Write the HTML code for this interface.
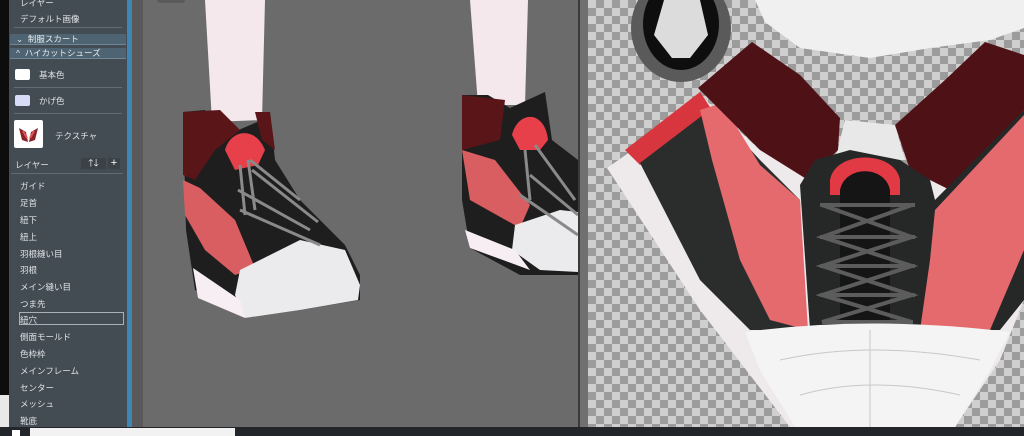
<!DOCTYPE html><html><head><meta charset="utf-8"><style>
*{margin:0;padding:0;box-sizing:border-box}
body{width:1024px;height:436px;overflow:hidden;position:relative;background:#6b6b6b;font-family:"Liberation Sans","Noto Sans CJK JP",sans-serif}
.abs{position:absolute}
#panel{left:9px;top:0;width:118px;height:427px;background:#434b53;color:#dfe3e6;font-size:8.5px}
.it{position:absolute;left:11px}
.hdr{position:absolute;left:1px;width:116px;height:11px;background:#4f6472;border-bottom:1px solid #6f8796;font-size:8.5px;line-height:11px;padding-left:6px;color:#e6eaec}
.ln{position:absolute;left:5px;width:108px;height:1px;background:#626b73}
.check{background-color:#cfcfcf;background-image:linear-gradient(45deg,#9c9c9c 25%,transparent 25%,transparent 75%,#9c9c9c 75%),linear-gradient(45deg,#9c9c9c 25%,transparent 25%,transparent 75%,#9c9c9c 75%);background-size:16px 16px;background-position:0 0,8px 8px}
</style></head><body>
<div class="abs" style="left:0;top:0;width:9px;height:427px;background:#0d0d0d"></div>
<div class="abs" style="left:0;top:395px;width:9px;height:32px;background:#e8e8e8"></div>
<div id="panel" class="abs">
<div class="it" style="top:-3px">レイヤー</div>
<div class="it" style="top:13px">デフォルト画像</div>
<div class="ln" style="top:27px"></div>
<div class="hdr" style="top:34px">⌄&nbsp; 制服スカート</div>
<div class="hdr" style="top:48px">^&nbsp; ハイカットシューズ</div>
<div class="abs" style="left:6px;top:69px;width:15px;height:11px;background:#fff;border-radius:2px"></div>
<div class="it" style="left:30px;top:69px">基本色</div>
<div class="ln" style="top:87px"></div>
<div class="abs" style="left:6px;top:95px;width:15px;height:11px;background:#d8dcf6;border-radius:2px"></div>
<div class="it" style="left:30px;top:95px">かげ色</div>
<div class="ln" style="top:113px"></div>
<div class="abs" style="left:5px;top:120px;width:29px;height:28px;background:#fff;border-radius:2px"><svg width="29" height="28"><path d="M5 8 L12 12 L14 22 L8 20Z M24 8 L17 12 L15 22 L21 20Z" fill="#8a2028"/><path d="M9 11 L13 18 M20 11 L16 18" stroke="#e05555" stroke-width="2"/></svg></div>
<div class="it" style="left:46px;top:130px">テクスチャ</div>
<div class="it" style="left:6px;top:159px">レイヤー</div>
<div class="abs" style="left:72px;top:158px;width:25px;height:11px;background:#3a4147;color:#fff;font-size:10px;line-height:11px;text-align:center">🡑🡓</div>
<div class="abs" style="left:99px;top:158px;width:12px;height:11px;background:#3a4147;color:#fff;font-size:11px;line-height:11px;text-align:center">+</div>
<div class="ln" style="left:2px;width:112px;top:173px"></div>
<div class="it" style="top:180px">ガイド</div>
<div class="it" style="top:197px">足首</div>
<div class="it" style="top:214px">紐下</div>
<div class="it" style="top:231px">紐上</div>
<div class="it" style="top:248px">羽根縫い目</div>
<div class="it" style="top:264px">羽根</div>
<div class="it" style="top:281px">メイン縫い目</div>
<div class="it" style="top:298px">つま先</div>
<div class="abs" style="left:10px;top:312px;width:105px;height:13px;border:1px solid #a9b0b6"></div>
<div class="it" style="top:314px">紐穴</div>
<div class="it" style="top:331px">側面モールド</div>
<div class="it" style="top:348px">色枠枠</div>
<div class="it" style="top:365px">メインフレーム</div>
<div class="it" style="top:382px">センター</div>
<div class="it" style="top:398px">メッシュ</div>
<div class="it" style="top:415px">靴底</div>
</div>
<div class="abs" style="left:127px;top:0;width:5px;height:427px;background:#3f86b4"></div>
<div class="abs" style="left:132px;top:0;width:11px;height:427px;background:#595959"></div>
<div class="abs" style="left:157px;top:0;width:28px;height:3px;background:#5a5a5a;border-radius:0 0 3px 3px"></div>
<svg class="abs" style="left:143px;top:0" width="437" height="427">
<g transform="translate(-143,0)">
<path d="M205 0 L265 0 L262 120 L212 122Z" fill="#f4e8ec"/>
<path d="M470 0 L528 0 L525 105 L478 105Z" fill="#f4e8ec"/>
<path d="M183 112 L205 110 L215 140 L262 120 L270 112 L275 160 L300 200 L345 245 L360 275 L360 300 L300 310 L245 318 L195 290 L186 230Z" fill="#1e1e1e"/>
<path d="M183 112 L220 110 L240 130 L215 150 L195 180 L183 175Z M255 112 L270 112 L275 150 L262 140Z" fill="#5a1518"/>
<path d="M183 180 L200 188 L235 220 L255 268 L235 275 L205 250 L185 215Z" fill="#d95e62"/>
<path d="M240 270 L300 240 L345 250 L360 285 L358 300 L300 310 L245 318 L235 295Z" fill="#ebebed"/>
<path d="M193 268 L240 300 L245 318 L198 298Z" fill="#f6eef2"/>
<path d="M225 150 C230 130 255 125 265 150 L258 165 L235 170Z" fill="#e8404a"/>
<path d="M240 165 L245 215 M248 160 L255 210 M250 160 L300 200 M252 170 L318 222 M238 190 L310 230 M240 210 L320 245" stroke="#8a8a8a" stroke-width="3" fill="none"/>
<path d="M462 95 L488 95 L510 108 L545 92 L552 140 L578 160 L578 275 L520 275 L470 248 L462 200Z" fill="#1e1e1e"/>
<path d="M462 95 L505 100 L500 140 L462 150Z" fill="#5a1518"/>
<path d="M462 150 L495 160 L530 205 L520 228 L470 200Z" fill="#d95e62"/>
<path d="M515 225 L560 210 L578 212 L578 272 L540 270 L512 250Z" fill="#ebebed"/>
<path d="M465 230 L515 250 L530 270 L470 248Z" fill="#f6eef2"/>
<path d="M512 135 C518 110 545 110 548 140 L540 150 L520 150Z" fill="#e8404a"/>
<path d="M525 150 L530 200 M535 145 L575 200 M530 175 L578 215 M520 195 L578 235" stroke="#8a8a8a" stroke-width="3" fill="none"/>
</g></svg>
<div class="abs" style="left:578px;top:0;width:10px;height:427px;background:#707070;border-left:2px solid #3a3a3a"></div>
<div class="abs check" style="left:588px;top:0;width:436px;height:427px"></div>
<svg class="abs" style="left:588px;top:0" width="436" height="427">
<g transform="translate(-588,0)">
<ellipse cx="681" cy="28" rx="50" ry="54" fill="#5a5a5a"/>
<ellipse cx="681" cy="24" rx="38" ry="46" fill="#0e0e0e"/>
<path d="M664 0 L700 0 L708 35 L690 58 L672 58 L654 35Z" fill="#dcdcdc"/>
<path d="M755 0 L1024 0 L1024 28 L990 40 L930 48 L870 58 L800 48 L765 22Z" fill="#f0f0f0"/>
<path d="M845 120 L895 125 L905 160 L835 160Z" fill="#e8e8e8"/>
<path d="M607 168 L650 138 L700 95 L760 150 L810 175 L930 178 L1024 110 L1024 300 L1000 360 L955 427 L790 427 L700 310Z" fill="#eeeaec"/>
<path d="M625 150 L700 92 L712 110 L640 165Z" fill="#d8363e"/>
<path d="M640 163 L712 108 L760 160 L800 200 L805 330 L750 330 L700 280Z" fill="#2a2d2c"/>
<path d="M700 110 L722 103 L760 165 L800 200 L808 330 L770 320 L740 260 L712 160Z" fill="#e56a6e"/>
<path d="M698 88 L752 42 L800 75 L840 118 L838 150 L808 180 L760 150Z" fill="#4e1216"/>
<path d="M895 125 L945 80 L985 42 L1024 55 L1024 110 L990 150 L950 190 L910 170Z" fill="#4e1216"/>
<path d="M800 185 L815 160 L850 150 L900 160 L930 180 L935 200 L1024 110 L1024 300 L1000 330 L810 330Z" fill="#262828"/>
<path d="M935 210 L1024 115 L1024 250 L990 330 L920 330 L930 260Z" fill="#e56a6e"/>
<path d="M830 180 C835 150 895 150 900 180 L900 195 L830 195Z" fill="#e23a44"/>
<path d="M840 190 C845 165 885 165 890 190 L890 320 L840 320Z" fill="#151515"/>
<path d="M820 205 L915 205 M820 237 L915 237 M820 266 L915 266 M820 295 L915 295 M822 322 L913 322 M822 205 L912 237 L822 266 L912 295 L822 322 M912 205 L822 237 L912 266 L822 295 L912 322" stroke="#5c5c5c" stroke-width="4" fill="none"/>
<path d="M745 332 Q870 315 1010 332 L990 370 L955 427 L795 427 L760 370Z" fill="#f4f4f4"/>
<path d="M780 360 Q870 340 980 360 M800 395 Q870 375 960 395 M870 330 L870 427" stroke="#c8c8c8" stroke-width="1" fill="none"/>
</g></svg>
<div class="abs" style="left:0;top:427px;width:1024px;height:9px;background:#22262b"></div>
<div class="abs" style="left:30px;top:428px;width:205px;height:8px;background:#f2f2f2"></div>
<div class="abs" style="left:12px;top:430px;width:8px;height:6px;background:#fff"></div>
</body></html>
